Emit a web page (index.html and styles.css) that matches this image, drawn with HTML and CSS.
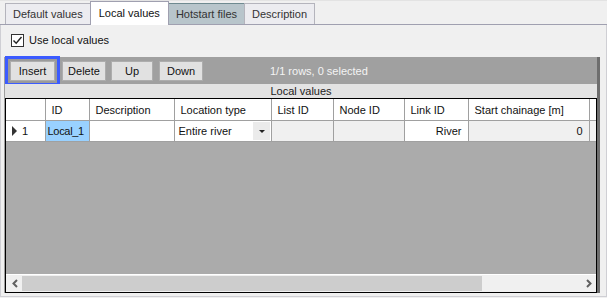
FILE: index.html
```html
<!DOCTYPE html>
<html lang="en">
<head>
  <meta charset="UTF-8" />
  <title>Local values</title>
  <link rel="stylesheet" href="styles.css">
</head>
<body>
  <div class="tabs">
    <div class="tab">Default values</div>
    <div class="tab active">Local values</div>
    <div class="tab hot">Hotstart files</div>
    <div class="tab">Description</div>
  </div>

  <div class="page">
    <label class="check">
      <span class="box">
        <svg width="11" height="11" viewBox="0 0 11 11"><path d="M1.5 5.5 L4.2 8.3 L9.5 2" fill="none" stroke="#222" stroke-width="1.4"/></svg>
      </span>
      Use local values
    </label>

    <div class="gridpanel">
      <div class="toolbar">
        <button class="btn b-insert focus">Insert</button>
        <button class="btn b-delete">Delete</button>
        <button class="btn b-up">Up</button>
        <button class="btn b-down">Down</button>
        <span class="status">1/1 rows, 0 selected</span>
      </div>
      <div class="caption">Local values</div>
      <div class="grid">
        <table>
          <colgroup>
            <col style="width: 39px">
            <col style="width: 44px">
            <col style="width: 85px">
            <col style="width: 97px">
            <col style="width: 62px">
            <col style="width: 71px">
            <col style="width: 64px">
            <col style="width: 121px">
            <col>
          </colgroup>
          <thead>
            <tr>
              <th></th>
              <th>ID</th>
              <th>Description</th>
              <th>Location type</th>
              <th>List ID</th>
              <th>Node ID</th>
              <th>Link ID</th>
              <th>Start chainage [m]</th>
              <th></th>
            </tr>
          </thead>
          <tbody>
            <tr>
              <td class="rowhead"><span class="arrow"></span>1</td>
              <td class="sel">Local_1</td>
              <td></td>
              <td class="combo">Entire river<span class="drop"></span></td>
              <td class="ro"></td>
              <td class="ro"></td>
              <td class="num">River</td>
              <td class="ro num">0</td>
              <td class="ro"></td>
            </tr>
          </tbody>
        </table>
        <div class="empty"></div>
        <div class="hscroll">
          <span class="sarrow">
            <svg width="8" height="9" viewBox="0 0 8 9"><path d="M6 1 L2.5 4.5 L6 8" fill="none" stroke="#606060" stroke-width="2"/></svg>
          </span>
          <div class="track"><div class="thumb"></div></div>
          <span class="sarrow">
            <svg width="8" height="9" viewBox="0 0 8 9"><path d="M2 1 L5.5 4.5 L2 8" fill="none" stroke="#606060" stroke-width="2"/></svg>
          </span>
        </div>
      </div>
    </div>
  </div>
</body>
</html>
```

FILE: styles.css
```css
body {
  margin: 0;
  font-family: "Liberation Sans", Arial, sans-serif;
  font-size: 11px;
  background-color: #f0f0f0;
  color: #111;
  width: 607px;
  height: 298px;
  overflow: hidden;
}
.tabs {
  display: flex;
  align-items: flex-end;
  padding-left: 5px;
  border-top: 1px solid #e3e3e3;
  border-bottom: 1px solid #a0a0b0;
  box-sizing: border-box;
  height: 25px;
}
.tab {
  height: 21px;
  line-height: 20px;
  padding: 0 7px;
  border: 1px solid #b4b4bc;
  border-bottom: none;
  margin-right: -1px;
  background: #ececf0;
  color: #333;
  box-sizing: border-box;
}
.tab.active {
  height: 24px;
  line-height: 22px;
  margin-bottom: -1px;
  padding: 0 8px;
  background: #fff;
  border-color: #a0a0b0;
  position: relative;
  color: #111;
}
.tab.hot {
  background: #b8c5cb;
  border-color: #6f8a90;
  padding: 0 7px;
}
.page {
  height: 272px;
  border: 1px solid #cfcfd4;
  border-top: none;
  box-sizing: border-box;
  padding: 5px 0 0 3px;
}
.check {
  display: flex;
  align-items: center;
  gap: 5px;
  height: 16px;
  margin: 2px 0 0 7px;
}
.box {
  width: 13px;
  height: 13px;
  border: 1px solid #333;
  box-sizing: border-box;
  background: #fff;
  display: flex;
  align-items: center;
  justify-content: center;
}
.gridpanel {
  margin-top: 9px;
  width: 596px;
  height: 236px;
  background: #a0a0a0;
  border-right: 3px solid #6e6e6e;
  box-sizing: border-box;
  display: flex;
  flex-direction: column;
}
.toolbar {
  display: flex;
  align-items: center;
  height: 27px;
  padding-left: 6px;
  gap: 6px;
}
.btn {
  font: inherit;
  height: 20px;
  padding: 0;
  background: #e1e1e1;
  border: 1px solid #adadad;
  color: #111;
}
.b-insert { width: 45px; }
.b-delete { width: 44px; margin-left: 1px; }
.b-up { width: 42px; margin-left: -1px; }
.b-down { width: 44px; }
.btn.focus {
  outline: 3px solid #3b5bff;
  outline-offset: 2px;
  box-shadow: 0 0 0 2px #9a9a9a;
}
.status {
  margin-left: 61px;
  color: #f4f4f4;
}
.caption {
  height: 14px;
  line-height: 14px;
  text-align: center;
  background: #e3e3e3;
  color: #222;
  margin-left: 1px;
}
.grid {
  flex: 1;
  margin-left: 1px;
  border: 1px solid #000;
  background: #ababab;
  display: flex;
  flex-direction: column;
}
table {
  border-collapse: collapse;
  width: 100%;
  table-layout: fixed;
}
th, td {
  height: 20px;
  padding: 0 6px;
  border: 1px solid #a0a0a0;
  border-top: none;
  font-weight: normal;
  text-align: left;
  background: #fff;
  white-space: nowrap;
  overflow: hidden;
}
th:first-child, td:first-child { border-left: none; }
th:last-child, td:last-child { border-right: none; }
th { height: 21px; }
.rowhead {
  padding-left: 6px;
}
.arrow {
  display: inline-block;
  width: 0;
  height: 0;
  border-left: 5px solid #333;
  border-top: 5px solid transparent;
  border-bottom: 5px solid transparent;
  margin-right: 5px;
  vertical-align: -1px;
}
.sel {
  background: #99d1ff;
  padding: 0 0 0 2px;
  letter-spacing: -0.3px;
}
.combo {
  position: relative;
  padding-left: 4px;
}
.drop {
  position: absolute;
  right: 1px;
  top: 1px;
  width: 17px;
  height: 18px;
  background: #ebebeb;
}
.drop::after {
  content: "";
  position: absolute;
  left: 6px;
  top: 8px;
  border-top: 3px solid #222;
  border-left: 3px solid transparent;
  border-right: 3px solid transparent;
}
.ro {
  background: #f0f0f0;
}
.num {
  text-align: right;
  padding-right: 6px;
}
.empty {
  flex: 1;
}
.hscroll {
  height: 17px;
  border-top: 1px solid #fff;
  background: #f0f0f0;
  display: flex;
  align-items: center;
}
.sarrow {
  width: 14px;
  display: flex;
  justify-content: center;
}
.sarrow:first-child { margin-left: 2px; }
.track {
  flex: 1;
  height: 15px;
}
.thumb {
  width: 460px;
  height: 15px;
  background: #cdcdcd;
}
```
